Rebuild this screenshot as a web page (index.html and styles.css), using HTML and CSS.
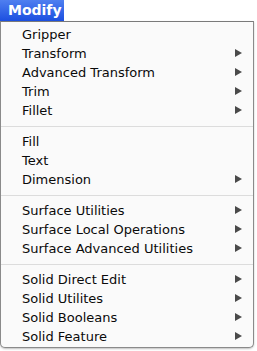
FILE: index.html
```html
<!DOCTYPE html>
<html lang="en">
<head>
    <meta charset="UTF-8">
    <title>Modify</title>
    <link rel="stylesheet" href="styles.css">
</head>
<body>
    <div class="menubar">
        <div class="menu-title">Modify</div>
    </div>
    <div class="menu">
        <div class="item">Gripper</div>
        <div class="item sub">Transform</div>
        <div class="item sub">Advanced Transform</div>
        <div class="item sub">Trim</div>
        <div class="item sub">Fillet</div>
        <div class="sep"></div>
        <div class="item">Fill</div>
        <div class="item">Text</div>
        <div class="item sub">Dimension</div>
        <div class="sep"></div>
        <div class="item sub">Surface Utilities</div>
        <div class="item sub">Surface Local Operations</div>
        <div class="item sub">Surface Advanced Utilities</div>
        <div class="sep"></div>
        <div class="item sub">Solid Direct Edit</div>
        <div class="item sub">Solid Utilites</div>
        <div class="item sub">Solid Booleans</div>
        <div class="item sub">Solid Feature</div>
    </div>
</body>
</html>
```

FILE: styles.css
```css
body {
    margin: 0;
    background-color: #fff;
    font-family: 'DejaVu Sans', 'Liberation Sans', sans-serif;
    color: #111;
    width: 257px;
    height: 351px;
    overflow: hidden;
}
.menubar {
    height: 21px;
    display: flex;
}
.menu-title {
    background: linear-gradient(#4f7ff0, #1b4fe0);
    color: #fff;
    font-size: 14px;
    font-weight: bold;
    padding: 0 6px 0 8px;
    line-height: 21px;
    width: 50px;
}
.menu {
    width: 254px;
    height: 327px;
    border: 1px solid #8a8a8a;
    border-top: 1px solid #7a7a7a;
    border-radius: 0 0 5px 5px;
    background-color: #fafafa;
    padding-top: 3px;
    box-sizing: border-box;
    box-shadow: 0 1px 2px rgba(0,0,0,0.25);
}
.item {
    height: 19px;
    line-height: 19px;
    font-size: 13px;
    padding-left: 21px;
    position: relative;
    color: #0a0a0a;
}
.item.sub::after {
    content: '';
    position: absolute;
    right: 11px;
    top: 5px;
    border-left: 7px solid #4a4a4a;
    border-top: 4px solid transparent;
    border-bottom: 4px solid transparent;
}
.sep {
    height: 1px;
    background-color: #dcdcdc;
    margin: 6px 0 5px 0;
}
```
